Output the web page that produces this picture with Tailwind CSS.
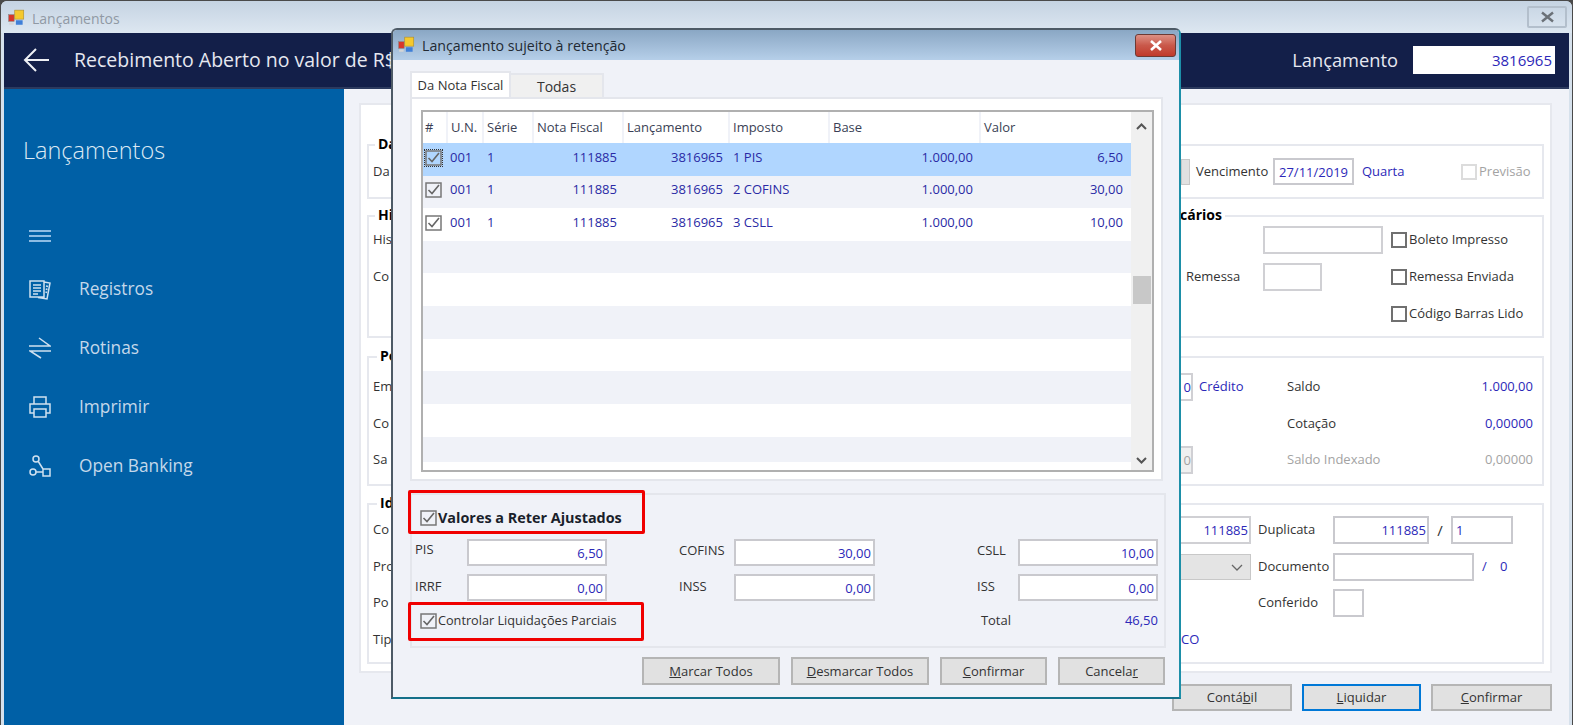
<!DOCTYPE html>
<html lang="pt-BR">
<head>
<meta charset="UTF-8">
<title>Lançamentos</title>
<script src="https://cdn.jsdelivr.net/npm/@tailwindcss/browser@4"></script>
</head>
<body class="bg-[#4a4a4a] font-['Open_Sans',sans-serif] text-[13px] text-[#333]">
<div class="relative w-[1573px] h-[725px] overflow-hidden">

  <!-- main window -->
  <div class="absolute left-[1px] top-[1px] w-[1571px] h-[724px] rounded-t-[6px] flex flex-col bg-[#d6e1ec] px-[3px]">
    <div class="h-[32px] flex items-center gap-[6px] pl-[7px] -mx-[3px] rounded-t-[6px] bg-gradient-to-b from-[#c5d3e2] to-[#dde7f1] shrink-0">
      <svg width="18" height="18" viewBox="0 0 16 16" class="mt-[2px]"><rect x="0.5" y="5" width="5" height="6" fill="#d8362a" stroke="#888" stroke-width=".5"/><rect x="6" y="1" width="8" height="8" fill="#f5c92e" stroke="#a8882a" stroke-width=".5"/><rect x="7" y="10" width="6" height="4" fill="#3f7fd8"/><rect x="1" y="12" width="4" height="2" fill="#d5d5d5"/></svg>
      <span class="mt-[3px] text-[14px] text-[#9099a4]">Lançamentos</span>
      <div class="ml-auto mr-[5px] w-[40px] h-[22px] border-2 border-[#b3bfcc] rounded-[2px] flex items-center justify-center text-[#6b7178]">
        <svg width="15" height="12" viewBox="0 0 15 12"><path d="M2 1.5 L13 10.5 M13 1.5 L2 10.5" stroke="#6b7178" stroke-width="2.4" fill="none"/></svg>
      </div>
    </div>

    <!-- header -->
    <div class="h-[56px] shrink-0 flex items-center bg-[#131f49] border-b-2 border-[#2c3a5e]">
      <svg class="ml-[19px]" width="27" height="26" viewBox="0 0 27 26"><path d="M26 13 H2 M13 2 L2 13 L13 24" stroke="#eef0f5" stroke-width="2" fill="none"/></svg>
      <span class="ml-[24px] text-[19.5px] text-[#e6e8f0]">Recebimento Aberto no valor de R$</span>
      <span class="ml-auto text-[18.3px] text-[#e6e8f0]">Lançamento</span>
      <div class="ml-[15px] mr-[14px] w-[142px] h-[28px] bg-white text-right pr-[3px] text-[15px] leading-[28px] text-[#2c28b8]">3816965</div>
    </div>

    <div class="flex flex-1 min-h-0">
      <!-- sidebar -->
      <aside class="w-[340px] shrink-0 bg-[#0060a6] text-[#c4d8ea]">
        <div class="pl-[19px] pt-[42px] text-[23.5px] font-light text-[#dce9f4] leading-[38px]">Lançamentos</div>
        <div class="ml-[25px] mt-[61px] w-[22px] flex flex-col gap-[3px]">
          <div class="h-[2px] bg-[#8dbce3]"></div><div class="h-[2px] bg-[#8dbce3]"></div><div class="h-[2px] bg-[#8dbce3]"></div>
        </div>
        <nav class="mt-[17px] pl-[25px] text-[17.3px] flex flex-col">
          <div class="h-[59px] flex items-center gap-[28px]">
            <svg width="22" height="22" viewBox="0 0 22 22" fill="none" stroke="#d0e1f0" stroke-width="1.5"><path d="M1 3 H15 V19 H1 Z M15 4 L21 5 L18 21 L9 19.5"/><path d="M4 7 H12 M4 10 H12 M4 13 H12 M4 16 H9 M17 8 L19 8.5 M16.8 11 L18.5 11.5 M16.5 14 L18 14.5"/></svg>
            <span>Registros</span>
          </div>
          <div class="h-[59px] flex items-center gap-[28px]">
            <svg width="22" height="22" viewBox="0 0 22 22" fill="none" stroke="#d0e1f0" stroke-width="1.5"><path d="M0 9 H21 L10 1 M22 14 H1 L12 21"/></svg>
            <span>Rotinas</span>
          </div>
          <div class="h-[59px] flex items-center gap-[28px]">
            <svg width="22" height="22" viewBox="0 0 22 22" fill="none" stroke="#d0e1f0" stroke-width="1.5"><path d="M5 8 V1 H17 V8 M5 17 H1 V8 H21 V17 H17 M5 13 H17 V21 H5 Z"/></svg>
            <span>Imprimir</span>
          </div>
          <div class="h-[59px] flex items-center gap-[28px]">
            <svg width="22" height="22" viewBox="0 0 22 22" fill="none" stroke="#d0e1f0" stroke-width="1.5"><circle cx="7" cy="4" r="3"/><circle cx="4" cy="17" r="3"/><path d="M9 6 L14 14 M7 17 H14 M14 14 H21 V21 H14 Z"/></svg>
            <span>Open Banking</span>
          </div>
        </nav>
      </aside>

      <!-- content behind the dialog -->
      <main class="flex-1 min-w-0 bg-[#f0f2f8] pl-[15px] pr-[17px] pt-[14px]">
        <div class="h-[570px] border-2 border-[#e6e8ee] bg-white pt-[39px] px-[6px]">

          <section class="relative h-[55px] border-2 border-[#e6e8ee] pl-[4px]">
            <b class="absolute left-[6px] -top-[11px] bg-white px-[3px] text-[14px] leading-[18px] text-black">Da</b>
            <div class="flex items-center h-full">
              <span class="w-[808px]">Da</span>
              <div class="w-[9px] h-[26px] bg-[#e1e1e1] border border-[#c8c8c8]"></div>
              <span class="ml-[6px] w-[77px]">Vencimento</span>
              <div class="w-[81px] h-[27px] border-2 border-[#c9c9ce] text-center leading-[24px] text-[#2c28b8]">27/11/2019</div>
              <span class="ml-[8px] w-[99px] text-[#2c28b8]">Quarta</span>
              <div class="w-[16px] h-[16px] border-2 border-[#dcdcdc]"></div>
              <span class="ml-[2px] text-[#a3a3a3]">Previsão</span>
            </div>
          </section>

          <section class="relative mt-[16px] h-[123px] border-2 border-[#e6e8ee] pl-[4px] pt-[9px]">
            <b class="absolute left-[6px] -top-[11px] bg-white px-[3px] text-[14px] leading-[18px] text-black">Hi</b>
            <b class="absolute left-[811px] -top-[11px] bg-white pr-[3px] text-[14px] leading-[18px] text-black">cários</b>
            <div class="flex items-center h-[28px]">
              <span class="w-[808px]">His</span>
              <span class="w-[82px]"></span>
              <div class="w-[120px] h-[28px] border-2 border-[#d0d0d4]"></div>
              <div class="ml-[8px] w-[16px] h-[16px] border-2 border-[#707070]"></div>
              <span class="ml-[2px]">Boleto Impresso</span>
            </div>
            <div class="flex items-center h-[28px] mt-[9px]">
              <span class="w-[808px]">Co</span>
              <span class="w-[82px] pl-[5px]">Remessa</span>
              <div class="w-[59px] h-[28px] border-2 border-[#d0d0d4]"></div>
              <div class="ml-[69px] w-[16px] h-[16px] border-2 border-[#707070]"></div>
              <span class="ml-[2px]">Remessa Enviada</span>
            </div>
            <div class="flex items-center h-[28px] mt-[9px]">
              <span class="w-[1018px]"></span>
              <div class="w-[16px] h-[16px] border-2 border-[#707070]"></div>
              <span class="ml-[2px]">Código Barras Lido</span>
            </div>
          </section>

          <section class="relative mt-[18px] h-[130px] border-2 border-[#e6e8ee] pl-[4px] pt-[15px]">
            <b class="absolute left-[8px] -top-[11px] bg-white px-[3px] text-[14px] leading-[18px] text-black">Pe</b>
            <div class="flex items-center h-[28px]">
              <span class="w-[808px]">Em</span>
              <div class="w-[12px] h-[28px] border-2 border-l-0 border-[#d0d0d4] text-right leading-[24px] text-[#2c28b8] overflow-hidden">0</div>
              <span class="ml-[6px] w-[88px] text-[#2c28b8]">Crédito</span>
              <span class="w-[180px]">Saldo</span>
              <span class="w-[66px] text-right text-[#2c28b8]">1.000,00</span>
            </div>
            <div class="flex items-center h-[28px] mt-[9px]">
              <span class="w-[914px]">Co</span>
              <span class="w-[180px]">Cotação</span>
              <span class="w-[66px] text-right text-[#2c28b8]">0,00000</span>
            </div>
            <div class="flex items-center h-[28px] mt-[8px]">
              <span class="w-[808px]">Sa</span>
              <div class="w-[12px] h-[28px] border-2 border-l-0 border-[#d0d0d4] bg-[#f0f0f0] text-right leading-[24px] text-[#a3a3a3] overflow-hidden">0</div>
              <span class="ml-[94px] w-[180px] text-[#a3a3a3]">Saldo Indexado</span>
              <span class="w-[66px] text-right text-[#a3a3a3]">0,00000</span>
            </div>
          </section>

          <section class="relative mt-[17px] h-[161px] border-2 border-[#e6e8ee] pl-[4px] pt-[11px]">
            <b class="absolute left-[8px] -top-[11px] bg-white px-[3px] text-[14px] leading-[18px] text-black">Id</b>
            <div class="flex items-center h-[28px]">
              <span class="w-[808px]">Co</span>
              <div class="w-[70px] h-[28px] border-2 border-l-0 border-[#d0d0d4] text-right pr-[1px] leading-[24px] text-[#2c28b8] overflow-hidden">111885</div>
              <span class="ml-[7px] w-[75px]">Duplicata</span>
              <div class="w-[96px] h-[28px] border-2 border-[#c9c9ce] text-right pr-[1px] leading-[24px] text-[#2c28b8]">111885</div>
              <span class="w-[22px] text-center text-[15px]">/</span>
              <div class="w-[62px] h-[28px] border-2 border-[#c9c9ce] pl-[3px] leading-[24px] text-[#2c28b8]">1</div>
            </div>
            <div class="flex items-center h-[28px] mt-[9px]">
              <span class="w-[808px]">Pro</span>
              <div class="w-[70px] h-[26px] bg-[#e4e4e4] border border-[#c8c8c8] border-l-0 flex items-center justify-end pr-[7px]">
                <svg width="12" height="7" viewBox="0 0 12 7"><path d="M1 1 L6 6 L11 1" stroke="#666" stroke-width="1.3" fill="none"/></svg>
              </div>
              <span class="ml-[7px] w-[75px]">Documento</span>
              <div class="w-[141px] h-[28px] border-2 border-[#c9c9ce]"></div>
              <span class="ml-[8px] w-[18px] text-[#2c28b8]">/</span>
              <span class="text-[#2c28b8]">0</span>
            </div>
            <div class="flex items-center h-[28px] mt-[8px]">
              <span class="w-[885px]">Po</span>
              <span class="w-[75px]">Conferido</span>
              <div class="w-[31px] h-[28px] border-2 border-[#c9c9ce]"></div>
            </div>
            <div class="flex items-center h-[28px] mt-[9px]">
              <span class="w-[808px]">Tip</span>
              <span class="text-[#2c28b8]">CO</span>
            </div>
          </section>
        </div>

        <div class="flex justify-end gap-[10px] mt-[11px]">
          <div class="w-[120px] h-[27px] border-2 border-[#b5b5b5] bg-[#e1e1e1] text-center leading-[23px]">Contá<u>b</u>il</div>
          <div class="w-[119px] h-[27px] border-2 border-[#0078d7] bg-[#e1e1e1] text-center leading-[23px]"><u>L</u>iquidar</div>
          <div class="w-[121px] h-[27px] border-2 border-[#b5b5b5] bg-[#e1e1e1] text-center leading-[23px]"><u>C</u>onfirmar</div>
        </div>
      </main>
    </div>
  </div>

  <!-- dialog -->
  <div class="absolute left-[391px] top-[28px] w-[790px] h-[671px] rounded-t-[6px] border-2 border-[#4d5a66] border-r-[#1d8fa8] border-b-[#14708a] bg-[#f0f2f8] flex flex-col">
    <div class="h-[30px] shrink-0 flex items-center gap-[6px] pl-[5px] rounded-t-[4px] bg-gradient-to-b from-[#8aa7c4] to-[#b6cfe9]">
      <svg width="18" height="18" viewBox="0 0 16 16"><rect x="0.5" y="5" width="5" height="6" fill="#d8362a" stroke="#888" stroke-width=".5"/><rect x="6" y="1" width="8" height="8" fill="#f5c92e" stroke="#a8882a" stroke-width=".5"/><rect x="7" y="10" width="6" height="4" fill="#3f7fd8"/><rect x="1" y="12" width="4" height="2" fill="#d5d5d5"/></svg>
      <span class="mt-[1px] text-[14.2px] text-[#222a33]">Lançamento sujeito à retenção</span>
      <div class="ml-auto mr-[3px] w-[41px] h-[23px] rounded-[3px] border border-[#6d3a34] bg-gradient-to-b from-[#dd9085] via-[#c9584a] to-[#c0392b] flex items-center justify-center">
        <svg width="14" height="11" viewBox="0 0 14 11"><path d="M2 1 L12 10 M12 1 L2 10" stroke="#fff" stroke-width="2.6" fill="none"/></svg>
      </div>
    </div>

    <div class="flex items-end pl-[17px] h-[37px] shrink-0">
      <div class="w-[101px] h-[26px] bg-white border-2 border-b-0 border-[#e4e6ec] text-center leading-[24px] relative z-10">Da Nota Fiscal</div>
      <div class="w-[93px] h-[24px] bg-[#f0f0f0] border-2 border-b-0 border-l-0 border-[#e4e6ec] text-center leading-[24px] text-[14px]">Todas</div>
    </div>

    <div class="ml-[17px] mr-[16px] h-[384px] shrink-0 bg-white border-2 border-[#e4e6ec] pl-[9px] pr-[7px] pt-[11px] pb-[7px]">
      <div class="flex h-full border-2 border-[#b0b0b0]">
        <div class="flex-1 min-w-0">
          <div class="grid grid-cols-[25px_36px_50px_90px_106px_100px_151px_150px] h-[31px] leading-[31px] text-[#3a3f55] bg-white">
            <span class="pl-[2px] border-r-2 border-[#f0f2f8]">#</span><span class="pl-[3px] border-r-2 border-[#f0f2f8]">U.N.</span><span class="pl-[3px] border-r-2 border-[#f0f2f8]">Série</span><span class="pl-[3px] border-r-2 border-[#f0f2f8]">Nota Fiscal</span><span class="pl-[3px] border-r-2 border-[#f0f2f8]">Lançamento</span><span class="pl-[3px] border-r-2 border-[#f0f2f8]">Imposto</span><span class="pl-[3px] border-r-2 border-[#f0f2f8]">Base</span><span class="pl-[3px]">Valor</span>
          </div>
          <div class="grid grid-cols-[25px_36px_50px_90px_106px_100px_151px_150px] h-[33px] pb-[4px] items-center bg-[#b0d6ff] text-[#2a2aa5]">
            <span class="pl-[2px]"><svg class="outline-1 outline-dotted outline-[#333]" width="17" height="16" viewBox="0 0 17 16" fill="none"><rect x="1" y="1" width="15" height="14" stroke="#777" stroke-width="1.500"/><path d="M3.500 8 L7 11.500 L14 3" stroke="#666" stroke-width="1.600"/></svg></span>
            <span class="pl-[2px]">001</span><span class="pl-[3px]">1</span><span class="text-right pr-[7px]">111885</span><span class="text-right pr-[7px]">3816965</span><span class="pl-[3px]">1 PIS</span><span class="text-right pr-[8px]">1.000,00</span><span class="text-right pr-[8px]">6,50</span>
          </div>
          <div class="grid grid-cols-[25px_36px_50px_90px_106px_100px_151px_150px] h-[32px] pb-[4px] items-center bg-[#f0f2f8] text-[#2a2aa5]">
            <span class="pl-[2px]"><svg width="17" height="16" viewBox="0 0 17 16" fill="none"><rect x="1" y="1" width="15" height="14" stroke="#777" stroke-width="1.500"/><path d="M3.500 8 L7 11.500 L14 3" stroke="#666" stroke-width="1.600"/></svg></span>
            <span class="pl-[2px]">001</span><span class="pl-[3px]">1</span><span class="text-right pr-[7px]">111885</span><span class="text-right pr-[7px]">3816965</span><span class="pl-[3px]">2 COFINS</span><span class="text-right pr-[8px]">1.000,00</span><span class="text-right pr-[8px]">30,00</span>
          </div>
          <div class="grid grid-cols-[25px_36px_50px_90px_106px_100px_151px_150px] h-[33px] pb-[4px] items-center bg-white text-[#2a2aa5]">
            <span class="pl-[2px]"><svg width="17" height="16" viewBox="0 0 17 16" fill="none"><rect x="1" y="1" width="15" height="14" stroke="#777" stroke-width="1.500"/><path d="M3.500 8 L7 11.500 L14 3" stroke="#666" stroke-width="1.600"/></svg></span>
            <span class="pl-[2px]">001</span><span class="pl-[3px]">1</span><span class="text-right pr-[7px]">111885</span><span class="text-right pr-[7px]">3816965</span><span class="pl-[3px]">3 CSLL</span><span class="text-right pr-[8px]">1.000,00</span><span class="text-right pr-[8px]">10,00</span>
          </div>
          <div class="h-[32px] bg-[#f0f2f8]"></div>
          <div class="h-[33px] bg-white"></div>
          <div class="h-[33px] bg-[#f0f2f8]"></div>
          <div class="h-[32px] bg-white"></div>
          <div class="h-[33px] bg-[#f0f2f8]"></div>
          <div class="h-[33px] bg-white"></div>
          <div class="h-[25px] bg-[#f0f2f8]"></div>
        </div>
        <div class="w-[21px] shrink-0 bg-[#f0f0f0] flex flex-col items-center">
          <svg class="mt-[11px]" width="11" height="7" viewBox="0 0 11 7"><path d="M1 6 L5.500 1.500 L10 6" stroke="#555" stroke-width="2" fill="none"/></svg>
          <div class="mt-[146px] w-[18px] h-[28px] bg-[#c8c8c8]"></div>
          <svg class="mt-auto mb-[6px]" width="11" height="7" viewBox="0 0 11 7"><path d="M1 1 L5.500 5.500 L10 1" stroke="#555" stroke-width="2" fill="none"/></svg>
        </div>
      </div>
    </div>

    <div class="relative mt-[12px] ml-[17px] mr-[13px] h-[155px] shrink-0 border-2 border-[#e4e6ec] pl-[5px]">
      <label class="flex items-center gap-[1px] h-[44px] font-bold text-[14.4px] text-[#1a1f2b] pl-[3px] pt-[2px]">
        <svg width="17" height="16" viewBox="0 0 17 16" fill="none"><rect x="1" y="1" width="15" height="14" stroke="#777" stroke-width="1.500"/><path d="M3.500 8 L7 11.500 L14 3" stroke="#666" stroke-width="1.600"/></svg>
        Valores a Reter Ajustados
      </label>
      <div class="grid grid-cols-[50px_140px_127px_141px_143px_140px] gap-y-[8px] items-center">
        <span class="-mt-[5px] -ml-[2px]">PIS</span>
        <div class="h-[27px] border-2 border-[#c9c9ce] bg-white text-right pr-[2px] leading-[25px] text-[#2c28b8]">6,50</div>
        <span class="pl-[72px] -mt-[3px]">COFINS</span>
        <div class="h-[27px] border-2 border-[#c9c9ce] bg-white text-right pr-[2px] leading-[25px] text-[#2c28b8]">30,00</div>
        <span class="pl-[102px] -mt-[3px]">CSLL</span>
        <div class="h-[27px] border-2 border-[#c9c9ce] bg-white text-right pr-[2px] leading-[25px] text-[#2c28b8]">10,00</div>
        <span class="-mt-[2px] -ml-[2px]">IRRF</span>
        <div class="h-[27px] border-2 border-[#c9c9ce] bg-white text-right pr-[2px] leading-[25px] text-[#2c28b8]">0,00</div>
        <span class="pl-[72px] -mt-[2px]">INSS</span>
        <div class="h-[27px] border-2 border-[#c9c9ce] bg-white text-right pr-[2px] leading-[25px] text-[#2c28b8]">0,00</div>
        <span class="pl-[102px] -mt-[2px]">ISS</span>
        <div class="h-[27px] border-2 border-[#c9c9ce] bg-white text-right pr-[2px] leading-[25px] text-[#2c28b8]">0,00</div>
      </div>
      <div class="flex items-center mt-[10px] pl-[3px] pr-[6px]">
        <svg width="17" height="16" viewBox="0 0 17 16" fill="none"><rect x="1" y="1" width="15" height="14" stroke="#777" stroke-width="1.500"/><path d="M3.500 8 L7 11.500 L14 3" stroke="#666" stroke-width="1.600"/></svg>
        <span class="ml-[1px] text-[12.7px]">Controlar Liquidações Parciais</span>
        <span class="ml-auto w-[144px]">Total</span>
        <span class="text-[#2c28b8]">46,50</span>
      </div>
      <!-- red marks drawn over the screenshot -->
      <div class="absolute -left-[4px] -top-[5px] w-[237px] h-[44px] border-[3.5px] border-[#f00000] rounded-[2px]"></div>
      <div class="absolute -left-[4px] top-[107px] w-[236px] h-[39px] border-[3.5px] border-[#f00000] rounded-[2px]"></div>
    </div>

    <div class="flex justify-end gap-[11px] mt-[9px] mr-[14px]">
      <div class="w-[138px] h-[28px] border-2 border-[#b5b5b5] bg-[#e1e1e1] text-center leading-[24px]"><u>M</u>arcar Todos</div>
      <div class="w-[138px] h-[28px] border-2 border-[#b5b5b5] bg-[#e1e1e1] text-center leading-[24px]"><u>D</u>esmarcar Todos</div>
      <div class="w-[107px] h-[28px] border-2 border-[#b5b5b5] bg-[#e1e1e1] text-center leading-[24px]"><u>C</u>onfirmar</div>
      <div class="w-[107px] h-[28px] border-2 border-[#b5b5b5] bg-[#e1e1e1] text-center leading-[24px]">Cancela<u>r</u></div>
    </div>
  </div>
</div>
</body>
</html>
